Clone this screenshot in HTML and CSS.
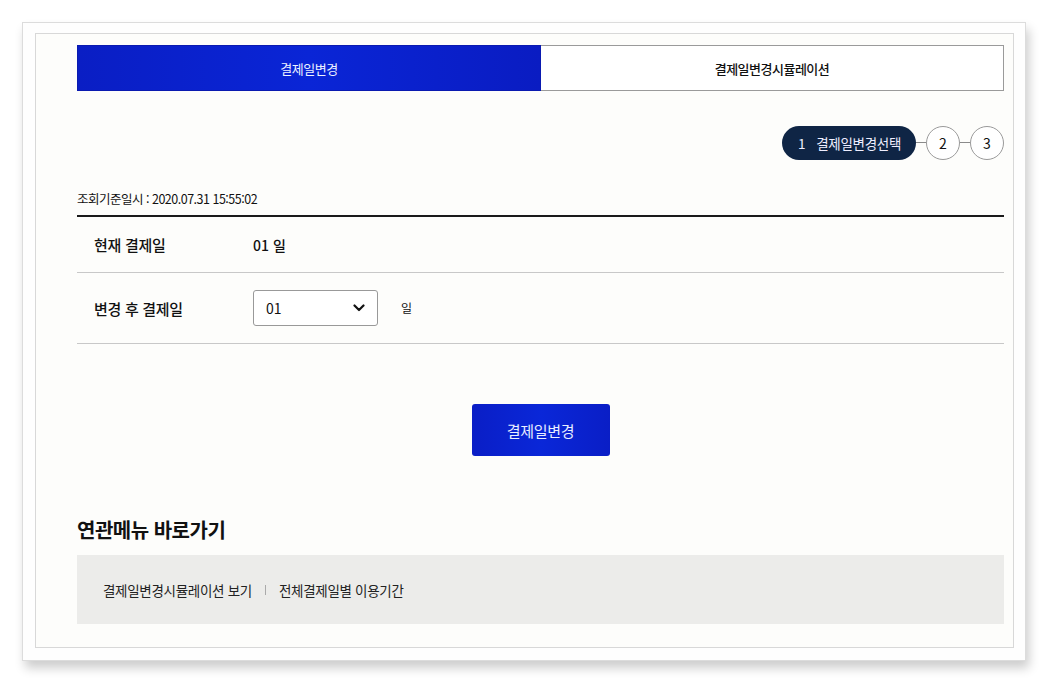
FILE: index.html
```html
<!DOCTYPE html>
<html lang="ko">
<head>
<meta charset="utf-8">
<link rel="stylesheet" href="styles.css">
</head>
<body>
<div class="frame">
  <div class="inner">
    <div class="tabs">
      <div class="tab active">결제일변경</div>
      <div class="tab">결제일변경시뮬레이션</div>
    </div>
    <div class="steps">
      <div class="step-pill"><span class="num">1</span>결제일변경선택</div>
      <span class="link"></span>
      <div class="step-circle">2</div>
      <span class="link"></span>
      <div class="step-circle">3</div>
    </div>
    <div class="stamp">조회기준일시 : 2020.07.31 15:55:02</div>
    <div class="table">
      <div class="row r1">
        <div class="label">현재 결제일</div>
        <div class="value">01 일</div>
      </div>
      <div class="row r2">
        <div class="label">변경 후 결제일</div>
        <div class="select">
          <span>01</span>
          <svg width="12" height="8" viewBox="0 0 12 8"><path d="M1.5 1.5 L6 6 L10.5 1.5" fill="none" stroke="#111" stroke-width="2.2" stroke-linecap="round" stroke-linejoin="round"/></svg>
        </div>
        <div class="unit">일</div>
      </div>
    </div>
    <div class="btn-wrap"><button class="btn">결제일변경</button></div>
    <h2 class="heading">연관메뉴 바로가기</h2>
    <div class="menu">
      <span class="mlink">결제일변경시뮬레이션 보기</span>
      <span class="sep"></span>
      <span class="mlink">전체결제일별 이용기간</span>
    </div>
  </div>
</div>
</body>
</html>
```

FILE: styles.css
```css
* { box-sizing: border-box; }
html, body { margin: 0; padding: 0; background: #ffffff; }
body {
  font-family: "Noto Sans CJK KR", "Noto Sans", sans-serif;
  color: #111;
  width: 1048px;
  height: 683px;
  overflow: hidden;
}
.frame {
  margin: 22px 0 0 22px;
  width: 1004px;
  height: 639px;
  border: 1px solid #dcdcdc;
  background: #fefefe;
  padding: 10px 12px 12px 12px;
  box-shadow: 3px 7px 10px rgba(0,0,0,0.2);
}
.inner {
  width: 979px;
  height: 615px;
  border: 1px solid #d8d8d8;
  background: #fdfdfb;
  padding: 11px 9px 0 41px;
}
.tabs {
  display: flex;
  height: 46px;
}
.tab {
  flex: 1 1 0;
  display: flex;
  align-items: center;
  justify-content: center;
  font-size: 13px;
  font-weight: 500;
  letter-spacing: -0.5px;
  border: 1px solid #9a9a9a;
  border-left: none;
  background: #fff;
  color: #111;
}
.tab.active {
  flex: 0 0 464px;
  background: linear-gradient(90deg, #0a1ec4 0%, #0a25d6 50%, #0a1cc2 100%);
  border: 1px solid #0a1ab0;
  color: #eef2ff;
  font-weight: 400;
}
.steps {
  display: flex;
  justify-content: flex-end;
  align-items: center;
  margin-top: 34px;
  height: 35px;
}
.step-pill {
  height: 34px;
  padding: 0 15px 0 16px;
  border-radius: 17px;
  background: #0f2545;
  color: #eef;
  font-size: 13.5px;
  display: flex;
  align-items: center;
  letter-spacing: -0.3px;
}
.step-pill .num { margin-right: 11px; }
.link {
  width: 10px;
  height: 1px;
  background: #8a8a8a;
}
.step-circle {
  width: 34px;
  height: 34px;
  border-radius: 50%;
  border: 1px solid #9a9a9a;
  background: #fff;
  display: flex;
  align-items: center;
  justify-content: center;
  font-size: 14px;
  color: #111;
}
.stamp {
  margin-top: 29px;
  font-size: 12.5px;
  letter-spacing: -0.5px;
  color: #111;
  height: 19px;
  line-height: 19px;
}
.table {
  margin-top: 7px;
  border-top: 2px solid #1a1a1a;
}
.row {
  display: flex;
  align-items: center;
  border-bottom: 1px solid #c8c8c8;
  padding-left: 17px;
}
.r1 { height: 56px; }
.r2 { height: 71px; }
.label {
  width: 159px;
  font-size: 15px;
  font-weight: 500;
  letter-spacing: -0.3px;
}
.value { font-size: 14px; font-weight: 500; }
.select {
  width: 125px;
  height: 36px;
  border: 1px solid #999;
  border-radius: 3px;
  background: #fff;
  display: flex;
  align-items: center;
  justify-content: space-between;
  padding: 0 12px 0 12px;
  font-size: 14px;
}
.unit {
  margin-left: 23px;
  font-size: 12px;
  margin-top: -2px;
}
.btn-wrap {
  display: flex;
  justify-content: center;
  margin-top: 60px;
}
.btn {
  width: 138px;
  height: 52px;
  border: none;
  border-radius: 3px;
  background: linear-gradient(90deg, #0a1ec6, #0a27d8 50%, #0a1ec6);
  color: #e8eeff;
  font-family: inherit;
  font-size: 15px;
  letter-spacing: -0.3px;
}
.heading {
  margin: 59px 0 0 0;
  font-size: 20px;
  font-weight: 700;
  letter-spacing: -0.5px;
  height: 29px;
  line-height: 29px;
}
.menu {
  margin-top: 11px;
  height: 69px;
  background: #ececea;
  display: flex;
  align-items: center;
  padding-left: 26px;
  font-size: 13.5px;
  letter-spacing: -0.3px;
  color: #222;
}
.sep {
  width: 1px;
  height: 10px;
  background: #aaa;
  margin: 0 13px;
}
```
